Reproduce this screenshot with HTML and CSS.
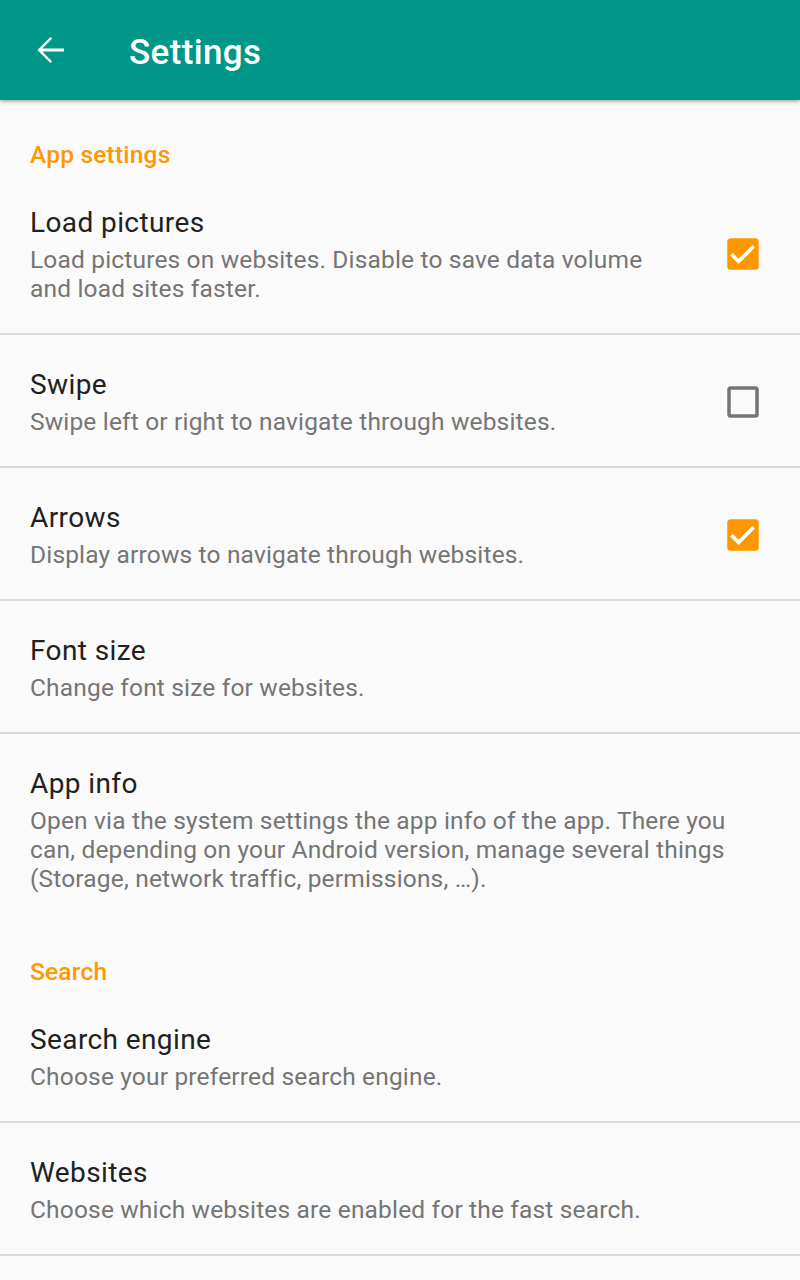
FILE: index.html
```html
<!DOCTYPE html>
<html lang="en">
<head>
<meta charset="utf-8">
<title>Settings</title>
<link rel="stylesheet" href="styles.css">
</head>
<body>
<header class="toolbar">
  <span class="nav-icon">
    <svg viewBox="0 0 24 24" width="42" height="42"><path fill="#fff" d="M20 11.1H7.6l5.6-5.6-.95-.95L4.8 12l7.45 7.45.95-.95-5.6-5.6H20z"/></svg>
  </span>
  <h1 class="toolbar-title">Settings</h1>
</header>
<main class="prefs">
  <div class="category">App settings</div>

  <div class="pref">
    <div class="pref-text">
      <div class="pref-title">Load pictures</div>
      <div class="pref-summary">Load pictures on websites. Disable to save data volume and load sites faster.</div>
    </div>
    <div class="pref-widget">
      <svg viewBox="0 0 24 24" width="42" height="42"><rect x="3" y="3" width="18" height="18" rx="2" fill="#FF9800"/><path d="M5.4 12.1l4.1 4.1 8.6-8.6" fill="none" stroke="#fff" stroke-width="2.1"/></svg>
    </div>
  </div>

  <div class="pref">
    <div class="pref-text">
      <div class="pref-title">Swipe</div>
      <div class="pref-summary">Swipe left or right to navigate through websites.</div>
    </div>
    <div class="pref-widget">
      <svg viewBox="0 0 24 24" width="42" height="42"><rect x="4" y="4" width="16" height="16" rx="1" fill="none" stroke="#757575" stroke-width="2"/></svg>
    </div>
  </div>

  <div class="pref">
    <div class="pref-text">
      <div class="pref-title">Arrows</div>
      <div class="pref-summary">Display arrows to navigate through websites.</div>
    </div>
    <div class="pref-widget">
      <svg viewBox="0 0 24 24" width="42" height="42"><rect x="3" y="3" width="18" height="18" rx="2" fill="#FF9800"/><path d="M5.4 12.1l4.1 4.1 8.6-8.6" fill="none" stroke="#fff" stroke-width="2.1"/></svg>
    </div>
  </div>

  <div class="pref">
    <div class="pref-text">
      <div class="pref-title">Font size</div>
      <div class="pref-summary">Change font size for websites.</div>
    </div>
  </div>

  <div class="pref pref-last">
    <div class="pref-text">
      <div class="pref-title">App info</div>
      <div class="pref-summary">Open via the system settings the app info of the app. There you can, depending on your Android version, manage several things (Storage, network traffic, permissions, …).</div>
    </div>
  </div>

  <div class="category">Search</div>

  <div class="pref">
    <div class="pref-text">
      <div class="pref-title">Search engine</div>
      <div class="pref-summary">Choose your preferred search engine.</div>
    </div>
  </div>

  <div class="pref">
    <div class="pref-text">
      <div class="pref-title">Websites</div>
      <div class="pref-summary">Choose which websites are enabled for the fast search.</div>
    </div>
  </div>
</main>
</body>
</html>
```

FILE: styles.css
```css
html, body {
  margin: 0;
  padding: 0;
  background: #fafafa;
  font-family: Roboto, "Noto Sans", "Liberation Sans", sans-serif;
}

.toolbar {
  position: relative;
  z-index: 1;
  height: 100px;
  background: #009688;
  display: flex;
  align-items: center;
  box-shadow: 0 2px 4px rgba(0, 0, 0, 0.22), 0 1px 2px rgba(0, 0, 0, 0.12);
}

.nav-icon {
  display: flex;
  margin-left: 29px;
  width: 42px;
  height: 42px;
}

.toolbar-title {
  margin: 0 0 0 58px;
  padding-top: 5px;
  font-size: 35px;
  font-weight: 500;
  letter-spacing: 0.35px;
  color: #fff;
  line-height: 40px;
}

.prefs {
  padding-top: 6px;
}

.category {
  padding: 34px 30px 4px;
  font-size: 24.5px;
  line-height: 29px;
  font-weight: 500;
  letter-spacing: 0.2px;
  color: #FF9800;
}

.pref {
  display: flex;
  align-items: center;
  padding: 32px 28px 30px 30px;
  border-bottom: 2px solid #dadada;
}

.pref-last {
  border-bottom: none;
}

.pref-text {
  flex: 1;
  min-width: 0;
}

.pref-title {
  font-size: 28px;
  line-height: 36px;
  letter-spacing: 0.4px;
  color: #212121;
}

.pref-summary {
  margin-top: 4px;
  font-size: 24.5px;
  line-height: 29px;
  letter-spacing: 0.17px;
  color: #757575;
}

.pref-widget {
  display: flex;
  margin-left: 44px;
  margin-right: 8px;
  width: 42px;
  height: 42px;
}
```
